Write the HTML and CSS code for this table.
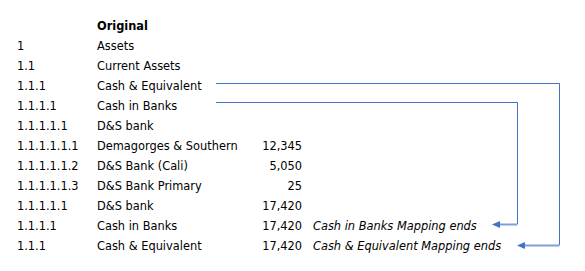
FILE: index.html
```html
<!DOCTYPE html>
<html>
<head>
<meta charset="utf-8">
<link rel="stylesheet" href="styles.css">
</head>
<body>
<div class="sheet">
  <div class="grid">
    <div class="num"></div><div class="label head">Original</div><div class="val"></div><div class="note"></div>
    <div class="num">1</div><div class="label">Assets</div><div class="val"></div><div class="note"></div>
    <div class="num">1.1</div><div class="label">Current Assets</div><div class="val"></div><div class="note"></div>
    <div class="num">1.1.1</div><div class="label">Cash &amp; Equivalent</div><div class="val"></div><div class="note"></div>
    <div class="num">1.1.1.1</div><div class="label">Cash in Banks</div><div class="val"></div><div class="note"></div>
    <div class="num">1.1.1.1.1</div><div class="label">D&amp;S bank</div><div class="val"></div><div class="note"></div>
    <div class="num">1.1.1.1.1.1</div><div class="label">Demagorges &amp; Southern</div><div class="val">12,345</div><div class="note"></div>
    <div class="num">1.1.1.1.1.2</div><div class="label">D&amp;S Bank (Cali)</div><div class="val">5,050</div><div class="note"></div>
    <div class="num">1.1.1.1.1.3</div><div class="label">D&amp;S Bank Primary</div><div class="val">25</div><div class="note"></div>
    <div class="num">1.1.1.1.1</div><div class="label">D&amp;S bank</div><div class="val">17,420</div><div class="note"></div>
    <div class="num">1.1.1.1</div><div class="label">Cash in Banks</div><div class="val">17,420</div><div class="note">Cash in Banks Mapping ends</div>
    <div class="num">1.1.1</div><div class="label">Cash &amp; Equivalent</div><div class="val">17,420</div><div class="note">Cash &amp; Equivalent Mapping ends</div>
  </div>
  <svg class="arrows" width="585" height="271" viewBox="0 0 585 271">
    <path d="M216 83.5 H559.5 V245" fill="none" stroke="#4472c4" stroke-width="1"/>
    <path d="M559.5 245.5 H523" fill="none" stroke="#7f9fda" stroke-width="2"/>
    <polygon points="517,245.5 525,242 525,249" fill="#4472c4"/>
    <path d="M216 102.5 H517.5 V224" fill="none" stroke="#4472c4" stroke-width="1"/>
    <path d="M517.5 224.5 H498" fill="none" stroke="#7f9fda" stroke-width="2"/>
    <polygon points="492,224.5 500,221 500,228" fill="#4472c4"/>
  </svg>
</div>
</body>
</html>
```

FILE: styles.css
```css
html, body {
  margin: 0;
  padding: 0;
  background: #ffffff;
}
.sheet {
  position: relative;
  width: 585px;
  height: 271px;
  font-family: "DejaVu Sans", Verdana, sans-serif;
  font-size: 11.4px;
  color: #000;
}
.grid {
  display: grid;
  grid-template-columns: 80px 165px 40px 250px;
  grid-auto-rows: 20px;
  padding: 16px 0 0 17px;
}
.grid > div {
  line-height: 20px;
  white-space: nowrap;
}
.head {
  font-weight: bold;
}
.val {
  text-align: right;
}
.note {
  font-style: italic;
  padding-left: 11px;
}
.arrows {
  position: absolute;
  left: 0;
  top: 0;
  pointer-events: none;
}
```
